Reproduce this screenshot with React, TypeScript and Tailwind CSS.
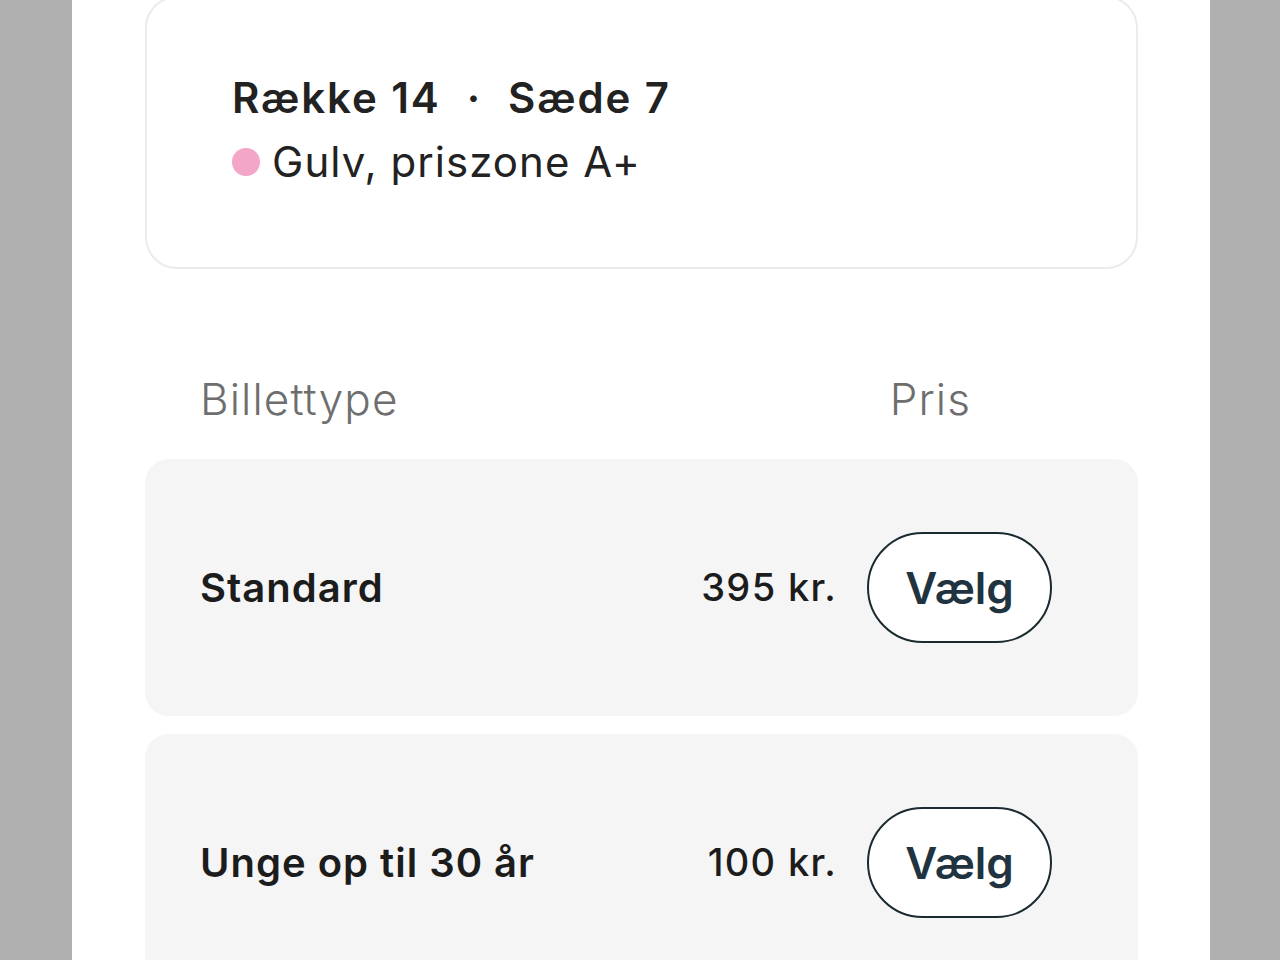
import React from 'react';

type TicketType = {
    label: string;
    price: string;
};

const ticketTypes: TicketType[] = [
    { label: 'Standard', price: '395 kr.' },
    { label: 'Unge op til 30 år', price: '100 kr.' },
];

const TicketRow: React.FC<{ ticket: TicketType }> = ({ ticket }) => {
    return (
        <div className="flex h-[257px] shrink-0 items-center rounded-[24px] bg-[#f5f5f5] pl-[55px] pr-[86px]">
            <span className="flex-1 text-[40px] font-semibold tracking-[0.025em] text-[#1c1c1c]">{ticket.label}</span>
            <span className="text-[38px] font-medium tracking-[0.035em] text-[#1c1c1c]">{ticket.price}</span>
            <button
                type="button"
                className="ml-[30px] flex h-[111px] w-[185px] items-center justify-center rounded-full border-2 border-[#1b2a30] bg-white text-[44px] font-semibold text-[#1f3440]"
            >
                Vælg
            </button>
        </div>
    );
};

const App: React.FC = () => {
    return (
        <div
            className="flex h-[960px] w-full overflow-hidden bg-[#b0b0b0]"
            style={{ fontFamily: 'Inter, "Noto Sans", sans-serif' }}
        >
            <div className="ml-[72px] flex w-[1138px] flex-col bg-white pl-[73px] pr-[72px]">
                {/* seat info card */}
                <div className="-mt-[4px] flex flex-col rounded-[32px] border-2 border-[#ebebeb] pb-[73px] pl-[85px] pt-[68px]">
                    <div className="flex items-center text-[42px] font-semibold leading-[64px] tracking-[0.045em] text-[#222]">
                        <span>Række 14</span>
                        <span className="mx-[26px]">·</span>
                        <span>Sæde 7</span>
                    </div>
                    <div className="flex items-center text-[42px] leading-[64px] tracking-[0.025em] text-[#222]">
                        <span className="mr-[12px] h-[28px] w-[28px] rounded-full bg-[#f3a6c8]" />
                        <span>Gulv, priszone A+</span>
                    </div>
                </div>

                {/* table header */}
                <div className="mt-[98px] flex justify-between pl-[55px] pr-[167px] text-[44px] font-light leading-[64px] tracking-[0.025em] text-[#6e6e6e]">
                    <span>Billettype</span>
                    <span>Pris</span>
                </div>

                <div className="mt-[28px] flex flex-col gap-[18px]">
                    {ticketTypes.map((ticket) => (
                        <TicketRow key={ticket.label} ticket={ticket} />
                    ))}
                </div>
            </div>
        </div>
    );
};

export default App;
